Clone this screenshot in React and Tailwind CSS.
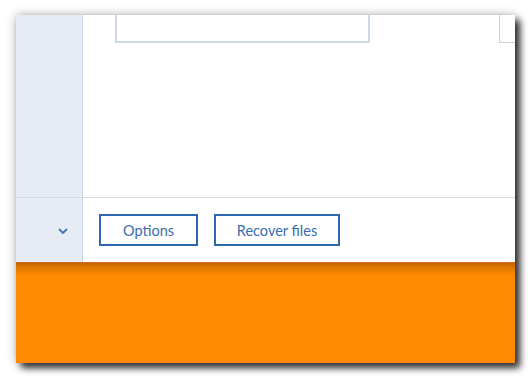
import React from "react";

export default function App() {
  return (
    <div className="w-[532px] h-[380px] bg-white pt-[15px] pl-[16px] overflow-hidden" style={{ fontFamily: "Lato, 'Noto Sans', sans-serif" }}>
      <div className="w-[499px] h-[348px] flex flex-col bg-white shadow-[5px_5px_7px_rgba(0,0,0,0.8),0_0_10px_rgba(0,0,0,0.28)]">
        {/* top content */}
        <div className="flex h-[183px] border-b border-[#d3dbe6]">
          <div className="w-[67px] shrink-0 bg-[#e6ebf4] border-r border-[#cbd5e3]" />
          <div className="flex-1 flex justify-between">
            <div className="ml-[32px] w-[255px] h-[28px] border-x-2 border-b-2 border-[#cdd9ea]" />
            <div className="w-[16px] h-[28px] border-l border-b border-[#c9d1dc]" />
          </div>
        </div>
        {/* bottom bar */}
        <div className="flex h-[64px]">
          <div className="w-[67px] shrink-0 bg-[#e6ebf4] border-r border-[#cbd5e3] flex items-center justify-end pr-[14px]">
            <svg width="10" height="6" viewBox="0 0 10 6" className="mt-[1px]">
              <path d="M1 1 L5 5 L9 1" fill="none" stroke="#4a78b8" strokeWidth="2" />
            </svg>
          </div>
          <div className="flex-1 flex items-center gap-[16px] pl-[16px]">
            <button className="w-[99px] h-[32px] border-2 border-[#2e67ae] text-[#3a6db0] text-[14.5px] pt-[2px] flex items-center justify-center">
              Options
            </button>
            <button className="w-[126px] h-[32px] border-2 border-[#2e67ae] text-[#3a6db0] text-[14.5px] pt-[2px] flex items-center justify-center">
              Recover files
            </button>
          </div>
        </div>
        {/* orange */}
        <div className="flex-1 bg-[linear-gradient(to_bottom,#d8732a_0px,#c46200_1px,#e07800_6px,#ff8a00_13px,#ff8a00_100%)]" />
      </div>
    </div>
  );
}
